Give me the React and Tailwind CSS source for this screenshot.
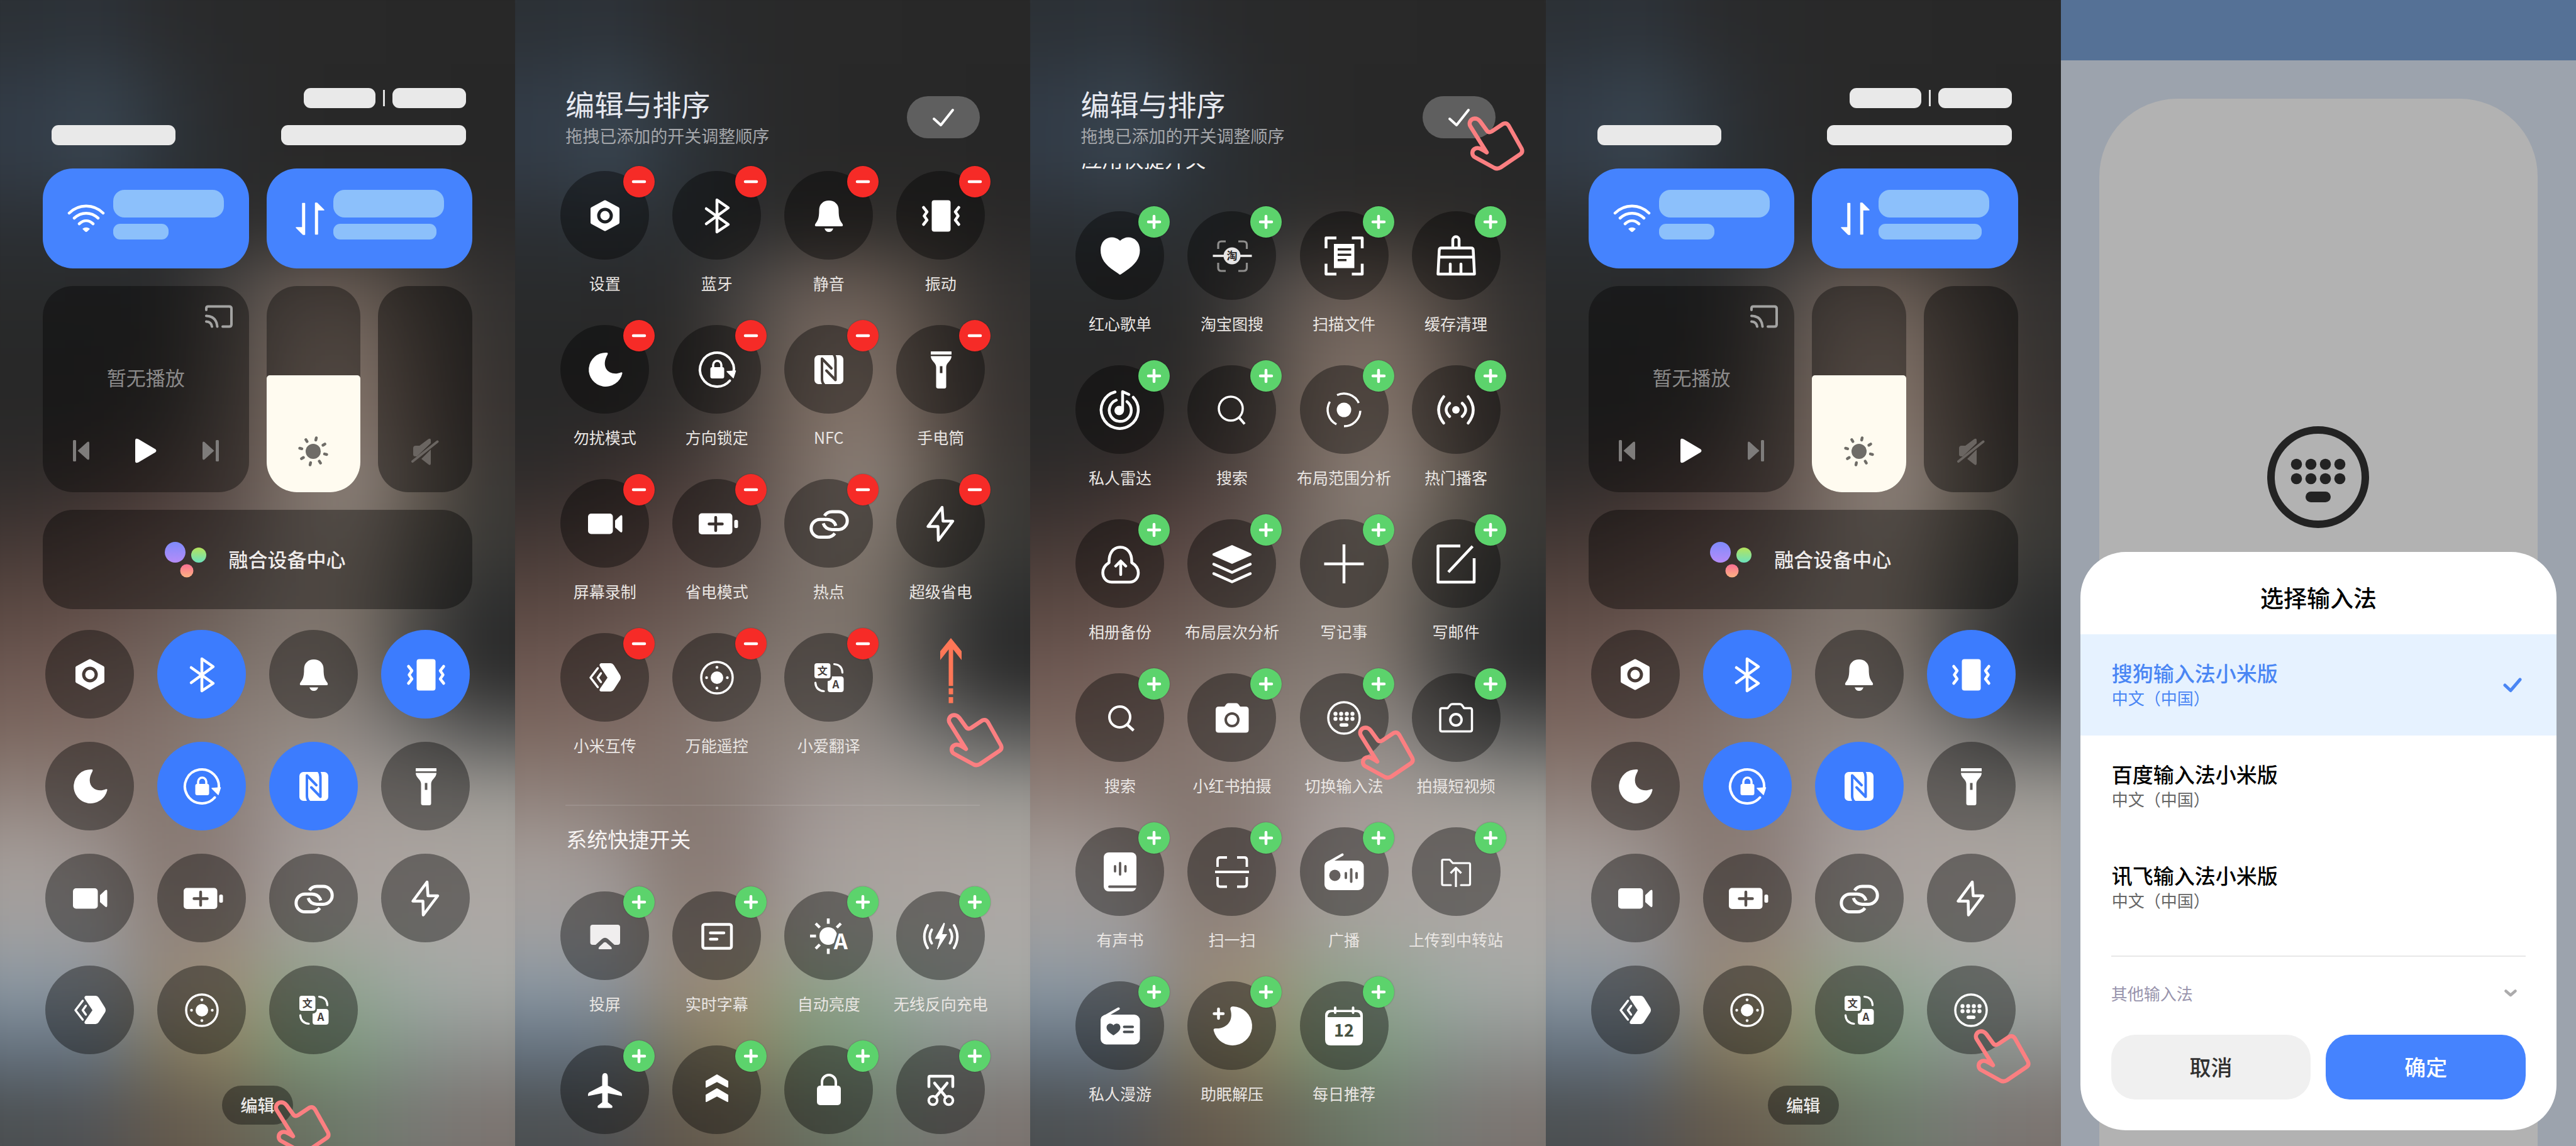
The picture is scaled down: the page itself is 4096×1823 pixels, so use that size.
import React, { useId } from "react";

/* Colour samples of the blurred wallpaper, top to bottom, left to right. */
const WALLPAPER = [
  "2c3136 2d333a 2b2c2e 292a2b 292929 292929 282828 282828",
  "323b46 38444f 2f353b 2a2b2d 292929 282828 282828 272727",
  "333c47 3a4652 2d343b 2a2c2e 292929 282828 282828 272727",
  "2c3035 2d3237 2b2f32 2b2c2d 2f2d2c 302d2b 2e2c2a 2a2929",
  "292b2c 292a2b 2b2b2c 464341 655a54 665a52 4a433e 333130",
  "282828 282828 2c2a29 4a4440 72655d 7b6d64 564c45 353230",
  "282828 2a2828 322f2d 504844 78695f 85766c 5c5049 383331",
  "302c2b 382f2d 453936 5a4d48 7a6d65 8d827b 645a51 3b3835",
  "443835 4e3f3b 5a4844 605450 7b7069 82786f 565049 3a3936",
  "5a4842 604e48 675650 6d615a 7d736c 796f66 4b4946 2d2e2e",
  "6d5852 735f59 75665f 7c7069 857a74 7f766f 484644 292929",
  "7c6860 7e6b64 84736c 8a7e78 91877f 8e8884 73716f 5a5a59",
  "90827c 8a7d77 84766f 8b7f79 9d9390 a39b97 a09b96 9d9a95",
  "a59d99 9c9390 877972 8c7e7a a39b98 a9a19d aaa39f aaa5a0",
  "a2a09f a09d9d 8d8179 94877f a29e98 a8a5a0 aba6a3 ada9a6",
  "8b97a2 8c949c 95897b 9d8f78 8fa088 93a493 9faaa4 a5a8a5",
  "65727f 66737f 7c7560 8b8262 7c9274 7f9880 87928b 8d8f8d",
  "4c5052 525355 62584c 6a6152 686f60 6e7a6b 777773 7b7470",
].map((row) => row.split(" "));

const padRow = (row) => [row[0], ...row, row[row.length - 1]];
const CELLS = [WALLPAPER[0], ...WALLPAPER, WALLPAPER[WALLPAPER.length - 1]].flatMap(padRow);

function Wallpaper() {
  return (
    <div
      aria-hidden="true"
      className="absolute -inset-x-[12.5%] -inset-y-[5.5%] grid grid-cols-10 auto-rows-fr blur-[50px]"
    >
      {CELLS.map((c, i) => (
        <div key={i} style={{ backgroundColor: "#" + c }} />
      ))}
    </div>
  );
}

/* ---------- icon helpers ---------- */

function Cut({ cut, children }) {
  const id = useId();
  return (
    <>
      <mask id={id} maskUnits="userSpaceOnUse" x="0" y="0" width="72" height="72">
        <rect width="72" height="72" fill="#fff" />
        {cut}
      </mask>
      <g mask={`url(#${id})`}>{children}</g>
    </>
  );
}

function Line({ w = 4.5, c = "currentColor", cap = "round", ...rest }) {
  return <path fill="none" stroke={c} strokeWidth={w} strokeLinecap={cap} strokeLinejoin="round" {...rest} />;
}

const ICONS = {
  settings: (
    <>
      <path
        d="M36 14L56.500 25V47L36 58L15.500 47V25ZM36 21a15 15 0 1 0 0 30a15 15 0 1 0 0-30Z"
        fillRule="evenodd"
        stroke="currentColor"
        strokeWidth="5"
        strokeLinejoin="round"
      />
      <circle cx="36" cy="36" r="7.500" />
    </>
  ),
  bluetooth: <Line d="M19 25L54 50L36 62V11L54 23.500L19 49" />,
  bell: (
    <>
      <path d="M36 12C27 12 20.500 18 20.500 27C20.500 41 18 44 14.500 49Q12.500 53 16 53H56Q59.500 53 57.500 49C54 44 51.500 41 51.500 27C51.500 18 45 12 36 12Z" />
      <path d="M29 56.500H43Q41 62 36 62Q31 62 29 56.500Z" />
    </>
  ),
  vibrate: (
    <>
      <rect x="21.500" y="11.500" width="30" height="50" rx="4" />
      <Line d="M8.500 23L14 30L9.500 36.500L14 43L8.500 50M64.500 23L59 30L63.500 36.500L59 43L64.500 50" />
    </>
  ),
  moon: <path d="M38 9A27 27 0 1 0 63.500 42Q64 39.500 61 40.500C46 47 27 35 40 12Q41.500 8.500 38 9Z" />,
  rotationLock: (
    <>
      <Line w={4} d="M62.500 41A27 27 0 1 0 56.500 53.500" />
      <path d="M52 39L65.500 38L62 49Z" stroke="currentColor" strokeWidth="1.500" strokeLinejoin="round" />
      <rect x="25.500" y="32" width="22" height="18" rx="3" />
      <Line w={3.5} d="M30 33V28.500a6.500 6.500 0 0 1 13 0V33" />
    </>
  ),
  nfc: (
    <Cut
      cut={
        <g fill="none" stroke="#000" strokeWidth="4" strokeLinecap="round" strokeLinejoin="round">
          <path d="M28.500 60Q25 57 25 51V18.500L40 34" />
          <path d="M43.500 11.500Q46.500 15 46.500 21V52.500L32 37.500" />
        </g>
      }
    >
      <rect x="13" y="13" width="46" height="46" rx="6.500" />
    </Cut>
  ),
  torch: (
    <>
      <rect x="20" y="7" width="33" height="5" rx="0.500" />
      <path
        fillRule="evenodd"
        d="M20 14.500H53C53 22 44.500 25 44.500 32V63Q44.500 66 41.500 66H32Q28.500 66 28.500 63V32C28.500 25 20 22 20 14.500ZM34.500 30.500V41.500H38.500V30.500Z"
      />
    </>
  ),
  video: (
    <>
      <rect x="9" y="20" width="39.500" height="32.500" rx="5" />
      <path d="M52 31L60 23.500Q63.500 21 63.500 25V47.500Q63.500 51.500 60 49L52 42Z" />
    </>
  ),
  battery: (
    <Cut cut={<path d="M23.500 36.500H44.500M34 26V47" stroke="#000" strokeWidth="4.500" strokeLinecap="round" />}>
      <rect x="7" y="19.500" width="53.500" height="33.500" rx="5" />
      <rect x="63.500" y="30" width="6" height="13" rx="2.500" />
    </Cut>
  ),
  link: (
    <>
      <Line w={5} cap="butt" d="M29 23.500Q33 17 41 17H51A14.200 14.200 0 0 1 51 45.400H41Q30 45 27 35.500" />
      <Line w={5} cap="butt" d="M45.500 51.500Q41 57.600 33 57.600H22A14.200 14.200 0 0 1 22 29.200H33Q44 29.500 47 39.500" />
    </>
  ),
  bolt: <Line d="M38 10L15.500 40.500H31.500L32 62.500L55 32H39.500Z" />,
  miShare: (
    <>
      <path d="M29.500 13H45Q48 13 50 16L60 32Q62 36 60 39.500L50 55Q48 58 45 58H29.500Q26 57 28 53.500L40 36L28 18Q26 14.500 29.500 13Z" />
      <Line w={3.5} d="M24.500 21L13 36L24.500 51M29.500 29L24.500 36L29.500 43" />
    </>
  ),
  remote: (
    <>
      <circle cx="36" cy="36" r="25" fill="none" stroke="currentColor" strokeWidth="3.500" />
      <circle cx="36" cy="36" r="10" />
      {[[36, 19.5], [36, 52.5], [19.5, 36], [52.5, 36]].map(([x, y]) => (
        <circle key={x + "-" + y} cx={x} cy={y} r="2.200" />
      ))}
    </>
  ),
  translate: (
    <>
      <rect x="13" y="13" width="25.500" height="24" rx="4" />
      <path d="M41 34H55Q59.500 34 59.500 38.500V54.500Q59.500 59 55 59H38.500Q34 59 34 54.500V41.500Q41 41 41 34Z" />
      <Line w={3.2} d="M44.500 14.500Q57 15.500 57.500 28M14.500 44Q15.500 56.500 28 57.500" />
      <text x="25.800" y="31" textAnchor="middle" fontSize="16" fontWeight="700" fill="#463f3d">文</text>
      <text x="47" y="53" textAnchor="middle" fontSize="17" fontWeight="700" fill="#463f3d">A</text>
    </>
  ),
  keyboard: (
    <>
      <circle cx="36" cy="36" r="25" fill="none" stroke="currentColor" strokeWidth="3.500" />
      {[22.5, 31.5, 40.5, 49.5].map((x) => (
        <g key={x}>
          <circle cx={x} cy="29.500" r="3.200" />
          <circle cx={x} cy="37.500" r="3.200" />
        </g>
      ))}
      <rect x="29" y="44.500" width="14" height="5.500" rx="2.700" />
    </>
  ),
  cast: (
    <g fill="#f0eeee">
      <path d="M16.500 18H56Q60 18 60 22V46Q60 50 56 50H51L40.500 40.500Q36 37 31.500 40.500L21 50H16.500Q12.500 50 12.500 46V22Q12.500 18 16.500 18Z" />
      <path d="M27 53L34 46.500Q36 45 38 46.500L45.500 53Q48.500 57 45 57H27.500Q24 57 27 53Z" />
    </g>
  ),
  subtitles: (
    <>
      <rect x="13.500" y="17.500" width="45.500" height="38" rx="3" fill="none" stroke="currentColor" strokeWidth="4.500" />
      <Line d="M25.500 31H47M25.500 41H36" />
    </>
  ),
  autoBrightness: (
    <>
      <Cut
        cut={
          <text x="55" y="57" textAnchor="middle" fontSize="34" fontWeight="700" fill="#000" stroke="#000" strokeWidth="6">A</text>
        }
      >
        <circle cx="35" cy="36" r="14" />
      </Cut>
      <Line cap="butt" d="M35 8V16.500M35 56V64.500M6 36H15.500M15 16L21.500 22.500M55 16L48.500 22.500M15 56L21.500 49.500" />
      <text x="55" y="57" textAnchor="middle" fontSize="34" fontWeight="700">A</text>
    </>
  ),
  wirelessCharge: (
    <>
      <path d="M41 15L27 40H35L30.500 57L45.500 33.500H37.500L42 16Z" stroke="currentColor" strokeLinejoin="round" />
      <Line w={4} d="M21.500 26Q15 37 21.500 47.500M50.500 26Q57 37 50.500 47.500M15 19Q4.500 37 15 55M57 19Q67.500 37 57 55" />
    </>
  ),
  airplane: (
    <path d="M36 9C39.500 9 40.500 12 40.500 16V29L61 39.500Q63.500 41 63 45.500L40.500 41V55.500L47.500 61Q48.500 64.500 46 64.500H26Q23.500 64.500 24.500 61L31.500 55.500V41L9 45.500Q8.500 41 11 39.500L31.500 29V16C31.500 12 32.500 9 36 9Z" />
  ),
  chevrons: (
    <g stroke="currentColor" strokeWidth="2" strokeLinejoin="round">
      <path d="M36 12L53 22V31L36 22L19 31V22Z" />
      <path d="M36 34L53 44V54L36 45L19 54V44Z" />
    </g>
  ),
  lock: (
    <>
      <rect x="17" y="29" width="38" height="31" rx="5" />
      <Line w={4} d="M25 31V23a11 11 0 0 1 22 0V31" />
    </>
  ),
  screenshot: (
    <>
      <Line d="M17 30.500V16Q17 14 19 14H53Q55 14 55 16V30.500" />
      <circle cx="23.500" cy="52.500" r="6.800" fill="none" stroke="currentColor" strokeWidth="4" />
      <circle cx="48.500" cy="52.500" r="6.800" fill="none" stroke="currentColor" strokeWidth="4" />
      <Line w={4.5} d="M26 25L44.500 47.500M46 25L27.500 47.500" />
    </>
  ),
  heart: (
    <path d="M36 66Q34 65 27 60C12 50 5 40 5 27C5 13 14 6.500 23 6.500Q30 6.500 36 12Q42 6.500 49 6.500C59 6.500 67.500 14 67.500 27C67.500 40 60 50 45 60Q38 65 36 66Z" />
  ),
  taobao: (
    <>
      <Line w={3.2} cap="butt" c="#8e8d8c" d="M26 13H19Q14 13 14 18V25M46 13H54Q59.500 13 59.500 18V25M26 60H19Q14 60 14 55V47M46 60H54Q59.500 60 59.500 55V47" />
      <path d="M5.500 36H67.500" stroke="#f2f1f0" strokeWidth="3.500" />
      <circle cx="36" cy="36" r="13.500" fill="#e6e5e5" />
      <text x="36" y="42" textAnchor="middle" fontSize="17" fontWeight="700" fill="#2a2827">淘</text>
    </>
  ),
  scanDoc: (
    <>
      <Line cap="butt" d="M24 7.500H7.500V24M48.500 7.500H65V24M24 65H7.500V48.500M48.500 65H65V48.500" />
      <path fillRule="evenodd" d="M20 17H52.500V55.500H20ZM26 24V27.500H47.500V24ZM26 32.500V36H47.500V32.500ZM26 41V44.500H40V41Z" />
    </>
  ),
  broom: (
    <>
      <Line w={4.5} d="M31 22V10.500a5 5 0 0 1 10 0V22" />
      <Line w={4.5} d="M13 23.500H60Q63.500 23.500 63.500 27L65.500 65H7.500L9.500 27Q9.500 23.500 13 23.500ZM9.500 38H63.500M27 49V64M44 49V64" />
    </>
  ),
  radar: (
    <>
      <Line w={4.5} d="M28 7.500A29.500 29.500 0 1 0 57 16M30 20.500A17.500 17.500 0 1 0 47 23" />
      <circle cx="34.500" cy="37" r="7.500" />
      <Line w={4.5} d="M40 37V7L50 11.500" />
    </>
  ),
  searchThin: (
    <>
      <circle cx="34" cy="34" r="19" fill="none" stroke="currentColor" strokeWidth="3.500" />
      <Line w={4} cap="butt" d="M47 48L56 58.500" />
    </>
  ),
  range: (
    <>
      <circle cx="36" cy="36" r="11.500" />
      <Line w={3.5} cap="butt" d="M25 12.500A26 26 0 0 1 59.500 25M62 37.500A26 26 0 0 1 36 62M24 59A26 26 0 0 1 13.500 23" />
    </>
  ),
  podcast: (
    <>
      <circle cx="36" cy="36" r="6" />
      <Line w={4.5} d="M26 25.500Q15 36 26 46.500M46 25.500Q57 36 46 46.500M16.500 15Q0.500 36 16.500 57M55.500 15Q71.500 36 55.500 57" />
    </>
  ),
  cloudUp: (
    <>
      <Line d="M22.500 65C13 65 8.500 57 8.500 50C8.500 43 12 38 18.500 34C18 19 25 9.500 36.500 9.500C48 9.500 55 19 54.500 34C61 38 65 43 65 50C65 58 60 65 51 65Z" />
      <Line d="M37 53V32M29 39.500L37 31.500L45 39.500" />
    </>
  ),
  layers: (
    <>
      <path d="M36 6L66.500 19.500Q68 21 66.500 22.500L36 36L5.500 22.500Q4 21 5.500 19.500Z" />
      <Line d="M7 36.500L36 49.500L65 36.500M7 51.500L36 64.500L65 51.500" />
    </>
  ),
  plus: <path d="M4.500 36H67.500M36 5V67" stroke="currentColor" strokeWidth="4.500" />,
  compose: <Line cap="butt" w={4.5} d="M43 7.500H7.500V65H65V27M24 49L62.500 8" />,
  search: (
    <>
      <circle cx="35.500" cy="34.500" r="16.500" fill="none" stroke="currentColor" strokeWidth="4" />
      <Line cap="butt" w={4.5} d="M46.500 46L57.500 56" />
    </>
  ),
  camera: (
    <>
      <path
        fillRule="evenodd"
        d="M15 18H24L27 14Q28 12.500 30 12.500H43Q45 12.500 46 14L49 18H57.500Q62.500 18 62.500 23V55Q62.500 59.500 57.500 59.500H15Q10 59.500 10 55V23Q10 18 15 18ZM36 27a12 12 0 1 0 0 24a12 12 0 1 0 0-24Z"
      />
      <circle cx="36" cy="39" r="8" />
    </>
  ),
  cameraOutline: (
    <>
      <Line w={3.5} d="M14 20.500H23L27 15.500Q28.500 14 30.500 14H42Q44 14 45.500 15.500L49 20.500H58.500Q61.500 20.500 61.500 23.500V54.500Q61.500 57.500 58.500 57.500H14Q11 57.500 11 54.500V23.500Q11 20.500 14 20.500Z" />
      <circle cx="36" cy="39" r="9" fill="none" stroke="currentColor" strokeWidth="3.800" />
    </>
  ),
  audiobook: (
    <Cut
      cut={
        <path d="M19 59.500H63M28 27V35M36 22V40M44.500 27V35" fill="none" stroke="#000" strokeWidth="3.800" strokeLinecap="round" />
      }
    >
      <rect x="10" y="5" width="52" height="62" rx="8" />
    </Cut>
  ),
  scan: (
    <Line w={3.8} cap="butt" d="M28 13H17Q13 13 13 17V28M44 13H55.500Q59.500 13 59.500 17V28M28 59.500H17Q13 59.500 13 55.500V44M44 59.500H55.500Q59.500 59.500 59.500 55.500V44M9 36H63" />
  ),
  radio: (
    <Cut
      cut={
        <>
          <circle cx="21.500" cy="41.500" r="9" fill="#000" />
          <path d="M39 38V45.500M47.500 32V51.500M56 38V45.500" stroke="#000" strokeWidth="4" strokeLinecap="round" />
        </>
      }
    >
      <rect x="5" y="18" width="62.500" height="47" rx="9" />
      <Line w={4} d="M8 23L33.500 8.500" />
    </Cut>
  ),
  folderUp: (
    <>
      <Line w={3.2} d="M28 57H16Q14 57 14 55V18Q14 16.500 16 16.500H26L31 22H57Q58.500 22 58.500 24V55Q58.500 57 56.500 57H44" />
      <Line w={3.2} cap="butt" d="M36 60V30M27.500 38L36 29.500L44.500 38" />
    </>
  ),
  radioHeart: (
    <Cut
      cut={
        <>
          <path d="M25.500 51C19 47 14.500 43 14.500 38.500C14.500 32 22 30 25.500 35C29 30 36.500 32 36.500 38.500C36.500 43 32 47 25.500 51Z" fill="#000" />
          <path d="M42.500 37.500H56M42.500 45.500H56" stroke="#000" strokeWidth="4" strokeLinecap="round" />
        </>
      }
    >
      <rect x="5" y="18" width="62.500" height="47.500" rx="9" />
      <Line w={4} d="M8 23L33.500 8.500" />
    </Cut>
  ),
  sleep: (
    <>
      <path d="M38 5A31 31 0 1 1 7 44Q5.500 40 10 40C27 41 39 28 33.500 10Q32.500 5 38 5Z" />
      <Line d="M7.500 16.500H22M14.500 9V24" w={4.5} />
    </>
  ),
  calendar: (
    <>
      <path
        fillRule="evenodd"
        d="M15 10.500H57Q66 10.500 66 19.500V58Q66 67 57 67H15Q6 67 6 58V19.500Q6 10.500 15 10.500ZM17 14Q10 14 10 22H62Q62 14 55 14Z"
      />
      <Line w={4} d="M22 7V15M50.500 7V15" />
      <text x="36" y="53" textAnchor="middle" fontSize="27" fontWeight="700" fill="#465242">12</text>
    </>
  ),
};

function Icon({ name }) {
  return (
    <svg viewBox="0 0 72 72" className="size-[72px]" fill="currentColor" aria-hidden="true">
      {ICONS[name]}
    </svg>
  );
}

function Hand({ className }) {
  return (
    <svg viewBox="0 0 91 87" className={"pointer-events-none absolute z-20 h-[87px] w-[91px] " + className} aria-hidden="true">
      <path
        d="M12 3.500C5 4 2 10.500 5 16L31 57.500C22 52 17 48 11.500 52C6.500 55.500 7.500 62.500 12 65L43 82Q48 84.500 53 81.500L84 60.500Q89 57 86.500 51.500L66 15Q62.500 9.500 57 12L39 24Q34 27 31 22.500L20.500 8Q17 3.500 12 3.500Z"
        fill="none"
        stroke="#fb7f81"
        strokeWidth="6.500"
        strokeLinejoin="round"
      />
    </svg>
  );
}

function SwipeUp({ className }) {
  return (
    <svg viewBox="0 0 34 104" className={"pointer-events-none absolute z-20 h-[104px] w-[34px] " + className} aria-hidden="true">
      <path d="M17 0L34 21V35L20.500 18V76H13.500V18L0 35V21ZM13.500 80H20.500V89.500H13.500ZM13.500 94H20.500V103.500H13.500Z" fill="#ff7757" />
    </svg>
  );
}

/* ---------- control centre ---------- */

function Tile({ className = "", children, ...rest }) {
  return (
    <div className={"overflow-hidden rounded-[48px] " + className} {...rest}>
      {children}
    </div>
  );
}

const TOGGLES = [
  ["settings", "设置", false],
  ["bluetooth", "蓝牙", true],
  ["bell", "静音", false],
  ["vibrate", "振动", true],
  ["moon", "勿扰模式", false],
  ["rotationLock", "方向锁定", true],
  ["nfc", "NFC", true],
  ["torch", "手电筒", false],
  ["video", "屏幕录制", false],
  ["battery", "省电模式", false],
  ["link", "热点", false],
  ["bolt", "超级省电", false],
  ["miShare", "小米互传", false],
  ["remote", "万能遥控", false],
  ["translate", "小爱翻译", false],
];

function RoundToggle({ icon, label, on, children }) {
  return (
    <div className="relative">
      <button
        type="button"
        aria-label={label}
        aria-pressed={on}
        className={
          "flex size-[141px] items-center justify-center rounded-full text-white " +
          (on ? "bg-[#3c7cfe]" : "bg-black/38")
        }
      >
        <Icon name={icon} />
      </button>
      {children}
    </div>
  );
}

function ControlCentre({ toggles, handOnEdit, handOnLast }) {
  return (
    <section className="relative overflow-hidden">
      <Wallpaper />
      <div className="relative flex flex-col px-[68px] pt-[140px]">
        <div className="flex items-center justify-end gap-3 pr-[10px]">
          <span className="h-8 w-[114px] rounded-[11px] bg-[#e9e9e9]" />
          <span className="h-[26px] w-[3px] bg-[#e0e0e0]" />
          <span className="h-8 w-[117px] rounded-[11px] bg-[#e9e9e9]" />
        </div>
        <div className="mt-[27px] flex justify-between pr-[10px] pl-[14px]">
          <span className="h-8 w-[197px] rounded-[11px] bg-[#e9e9e9]" />
          <span className="h-8 w-[294px] rounded-[11px] bg-[#e9e9e9]" />
        </div>

        <div className="mt-[37px] grid grid-cols-2 gap-7">
          <button type="button" aria-label="WLAN" className="flex h-[159px] items-center gap-[13px] rounded-[48px] bg-[#4583fe] pl-[39px] text-white">
            <svg viewBox="0 0 60 46" className="h-[46px] w-[60px]" aria-hidden="true">
              <Line w={4.5} d="M3 14C18 -1 42 -1 57 14M11 22C22 11.500 38 11.500 49 22M19 31C26 24.500 34 24.500 41 31" />
              <path d="M24 39Q30 34.500 36 39L32 43Q30 45 28 43Z" fill="currentColor" />
            </svg>
            <span className="mt-[34px] flex flex-col gap-[10px] self-start">
              <span className="h-[44px] w-[176px] rounded-[18px] bg-[#8cc0fb]" />
              <span className="h-[25px] w-[88px] rounded-[11px] bg-[#8cc0fb]" />
            </span>
          </button>
          <button type="button" aria-label="移动数据" className="flex h-[159px] items-center gap-[14px] rounded-[48px] bg-[#4583fe] pl-[46px] text-white">
            <svg viewBox="0 0 46 52" className="h-[52px] w-[46px]" fill="currentColor" aria-hidden="true">
              <g stroke="currentColor" strokeWidth="1.500" strokeLinejoin="round">
                <path d="M11 1.500H14.500V51H12L1 40H11Z" />
                <path d="M31.500 50.500V1H34L45 12H35V50.500Z" />
              </g>
            </svg>
            <span className="mt-[34px] flex flex-col gap-[10px] self-start">
              <span className="h-[44px] w-[176px] rounded-[18px] bg-[#8cc0fb]" />
              <span className="h-[25px] w-[164px] rounded-[11px] bg-[#8cc0fb]" />
            </span>
          </button>
        </div>

        <div className="mt-7 grid grid-cols-2 gap-7">
          <Tile className="flex h-[328px] flex-col bg-black/36">
            <button type="button" aria-label="投屏播放" className="mt-[30px] mr-[26px] self-end text-[#a3a3a2]">
              <svg viewBox="0 0 44 37" className="block h-[37px] w-[44px]" aria-hidden="true">
                <Line w={4} d="M2 8V5.500Q2 2.500 5 2.500H38.500Q42 2.500 42 6V31Q42 34.500 38.500 34.500H28M2 17.500Q18 18 19.500 34.500M2 26.500Q10 27 11 34.500" />
              </svg>
            </button>
            <p className="mt-[58px] text-center text-[31px] leading-10 text-[#8b8a8a]">暂无播放</p>
            <div className="mt-[77px] flex h-10 items-center justify-between px-12">
              <button type="button" aria-label="上一首" className="text-[#7e7c7b]">
                <svg viewBox="0 0 26 34" className="block h-[34px] w-[26px]" fill="currentColor" aria-hidden="true">
                  <rect width="5" height="34" rx="1.500" />
                  <path d="M7.500 17L23 3Q26 1.500 26 5V29Q26 32.500 23 31Z" />
                </svg>
              </button>
              <button type="button" aria-label="播放" className="text-white">
                <svg viewBox="0 0 34 40" className="block h-10 w-[34px]" fill="currentColor" aria-hidden="true">
                  <path d="M0 4Q0 -1 5 1.500L32 17.500Q35 20 32 22.500L5 38.500Q0 41 0 36Z" />
                </svg>
              </button>
              <button type="button" aria-label="下一首" className="text-[#7e7c7b]">
                <svg viewBox="0 0 26 34" className="block h-[34px] w-[26px]" fill="currentColor" aria-hidden="true">
                  <rect x="21" width="5" height="34" rx="1.500" />
                  <path d="M18.500 17L3 3Q0 1.500 0 5V29Q0 32.500 3 31Z" />
                </svg>
              </button>
            </div>
          </Tile>
          <div className="grid grid-cols-2 gap-7">
            <Tile className="flex h-[328px] flex-col justify-end bg-black/36" aria-label="亮度">
              <div className="flex h-[186px] items-end justify-center rounded-t-[5px] bg-[#fffbf0] pb-10">
                <svg viewBox="0 0 50 50" className="size-[50px] text-[#6f6c67]" aria-hidden="true">
                  <circle cx="25" cy="25" r="12" fill="currentColor" />
                  <g transform="rotate(13 25 25)">
                    <Line
                      w={4.5}
                      d="M25 3V6.500M25 43.500V47M3 25H6.500M43.500 25H47M9.500 9.500L12 12M38 38L40.500 40.500M9.500 40.500L12 38M38 12L40.500 9.500"
                    />
                  </g>
                </svg>
              </div>
            </Tile>
            <Tile className="flex h-[328px] items-end justify-center bg-black/40 pb-[42px]" aria-label="音量">
              <svg viewBox="0 0 44 44" className="size-11 text-[#6a6561]" fill="currentColor" aria-hidden="true">
                <path d="M3 16Q3 12 7 12H13L27 1.500Q31 -0.500 31 3V8L9 29H6Q3 29 3 26Z" />
                <path d="M31 18V40Q31 44 27.500 42L16 33Z" />
                <Line w={4} d="M2 37L41.500 5.500" />
              </svg>
            </Tile>
          </div>
        </div>

        <button type="button" className="mt-7 flex h-[158px] items-center justify-center gap-9 rounded-[48px] bg-black/38 pr-2">
          <svg viewBox="0 0 66 57" className="h-[57px] w-[66px]" aria-hidden="true">
            <defs>
              <linearGradient id="blobA" x2="0" y2="1"><stop stopColor="#7f8bfb" /><stop offset="1" stopColor="#b58cf8" /></linearGradient>
              <linearGradient id="blobB" x2="0" y2="1"><stop stopColor="#b5e35c" /><stop offset="1" stopColor="#6ce2bd" /></linearGradient>
              <linearGradient id="blobC" x2="0" y2="1"><stop stopColor="#fb6f93" /><stop offset="1" stopColor="#fcb382" /></linearGradient>
            </defs>
            <circle cx="16.500" cy="16.500" r="16.500" fill="url(#blobA)" />
            <circle cx="54" cy="21" r="12" fill="url(#blobB)" />
            <circle cx="35" cy="46" r="10.500" fill="url(#blobC)" />
          </svg>
          <span className="pb-[2px] text-[31px] leading-10 font-medium text-[#efeceb]">融合设备中心</span>
        </button>

        <div className="mt-[33px] grid grid-cols-4 justify-items-center gap-[37px] px-1">
          {toggles.map(([icon, label, on], i) => (
            <RoundToggle key={icon} icon={icon} label={label} on={on}>
              {handOnLast && i === toggles.length - 1 && <Hand className="top-[101px] left-[74px]" />}
            </RoundToggle>
          ))}
        </div>

        <div className="relative mt-[50px] self-center">
          <button type="button" className="flex h-[62px] w-[113px] items-center justify-center rounded-full bg-black/38 text-[27px] font-medium text-[#eceae8]">
            编辑
          </button>
          {handOnEdit && <Hand className="top-[23px] left-[82px]" />}
        </div>
      </div>
    </section>
  );
}

/* ---------- edit pages ---------- */

function Badge({ kind, label }) {
  const add = kind === "add";
  return (
    <button
      type="button"
      aria-label={(add ? "添加" : "移除") + label}
      className={
        "absolute -top-2 left-[100px] flex size-[50px] items-center justify-center rounded-full text-white shadow-[0_0_2px_rgba(0,0,0,0.35)] " +
        (add ? "bg-[#5cd36c]" : "bg-[#f62b27]")
      }
    >
      <svg viewBox="0 0 24 24" className="size-6" aria-hidden="true">
        <Line w={4.5} d={add ? "M3 12H21M12 3V21" : "M3 12H21"} />
      </svg>
    </button>
  );
}

function EditCell({ icon, label, kind, children }) {
  return (
    <div className="flex w-[141px] flex-col items-center">
      <div className="relative flex size-[141px] items-center justify-center rounded-full bg-black/38 text-white">
        <Icon name={icon} />
        <Badge kind={kind} label={label} />
        {children}
      </div>
      <span className="mt-[21px] text-[25px] leading-8 whitespace-nowrap text-[#eae6e3]">{label}</span>
    </div>
  );
}

function EditGrid({ className, children }) {
  return <div className={"grid grid-cols-4 justify-items-center gap-x-[37px] gap-y-[51px] px-[72px] " + className}>{children}</div>;
}

function EditPage({ hand, children }) {
  return (
    <section className="relative overflow-hidden">
      <Wallpaper />
      <div className="relative flex h-full flex-col">
        <header className="flex justify-between px-20 pt-[140px] pb-[26px]">
          <div>
            <h1 className="text-[46px] leading-[48px] text-[#e6e8ef]">编辑与排序</h1>
            <p className="mt-[10px] text-[27px] leading-9 text-[#a4a6aa]">拖拽已添加的开关调整顺序</p>
          </div>
          <div className="relative mt-[13px] self-start">
            <button type="button" aria-label="完成" className="flex h-[67px] w-[116px] items-center justify-center rounded-full bg-[#5f5f5f] text-white">
              <svg viewBox="0 0 36 32" className="h-8 w-9" aria-hidden="true">
                <Line w={4} d="M3 18L14 28L33 4" />
              </svg>
            </button>
            {hand && <Hand className="top-[32px] left-[71px]" />}
          </div>
        </header>
        <div className="min-h-0 flex-1 overflow-hidden">{children}</div>
      </div>
    </section>
  );
}

const SYSTEM = [
  ["cast", "投屏"],
  ["subtitles", "实时字幕"],
  ["autoBrightness", "自动亮度"],
  ["wirelessCharge", "无线反向充电"],
];
const SYSTEM_TAIL = [
  ["airplane", "飞行模式"],
  ["chevrons", "性能模式"],
  ["lock", "锁屏"],
  ["screenshot", "截屏"],
];
const APPS = [
  ["heart", "红心歌单"],
  ["taobao", "淘宝图搜"],
  ["scanDoc", "扫描文件"],
  ["broom", "缓存清理"],
  ["radar", "私人雷达"],
  ["searchThin", "搜索"],
  ["range", "布局范围分析"],
  ["podcast", "热门播客"],
  ["cloudUp", "相册备份"],
  ["layers", "布局层次分析"],
  ["plus", "写记事"],
  ["compose", "写邮件"],
  ["search", "搜索"],
  ["camera", "小红书拍摄"],
  ["keyboard", "切换输入法"],
  ["cameraOutline", "拍摄短视频"],
  ["audiobook", "有声书"],
  ["scan", "扫一扫"],
  ["radio", "广播"],
  ["folderUp", "上传到中转站"],
  ["radioHeart", "私人漫游"],
  ["sleep", "助眠解压"],
  ["calendar", "每日推荐"],
];

function SortPage() {
  return (
    <EditPage>
      <EditGrid className="pt-3">
        {TOGGLES.map(([icon, label]) => (
          <EditCell key={icon} icon={icon} label={label} kind="remove" />
        ))}
        <div className="relative w-[141px]">
          <SwipeUp className="top-2 left-[70px]" />
          <Hand className="top-[127px] left-20" />
        </div>
      </EditGrid>
      <hr className="mx-20 mt-[79px] border-t-2 border-white/10" />
      <h2 className="mt-8 px-[81px] text-[33px] leading-10 text-[#f7f4f3]">系统快捷开关</h2>
      <EditGrid className="mt-16">
        {SYSTEM.map(([icon, label]) => (
          <EditCell key={icon} icon={icon} label={label} kind="add" />
        ))}
        {SYSTEM_TAIL.map(([icon, label]) => (
          <div key={icon} className="relative flex size-[141px] items-center justify-center rounded-full bg-black/38 text-white">
            <Icon name={icon} />
            <Badge kind="add" label={label} />
          </div>
        ))}
      </EditGrid>
    </EditPage>
  );
}

function AppsPage() {
  return (
    <EditPage hand>
      <h2 className="-mt-7 px-[81px] text-[33px] leading-10 text-[#f7f4f3]">应用快捷开关</h2>
      <EditGrid className="mt-16">
        {APPS.map(([icon, label]) => (
          <EditCell key={icon} icon={icon} label={label} kind="add">
            {icon === "keyboard" && <Hand className="top-[83px] left-[92px]" />}
          </EditCell>
        ))}
      </EditGrid>
    </EditPage>
  );
}

/* ---------- input method picker ---------- */

const METHODS = ["搜狗输入法小米版", "百度输入法小米版", "讯飞输入法小米版"];

function PickerPage() {
  return (
    <section className="relative flex flex-col overflow-hidden bg-[#9ca3ad]">
      <div className="h-24 bg-[#557196]" />
      <div className="mx-[61px] mt-[61px] flex flex-1 justify-center rounded-t-[124px] bg-[#b2b2b2] pt-[521px]">
        <svg viewBox="0 0 162 162" className="size-[162px]" fill="#232323" aria-hidden="true">
          <circle cx="81" cy="81" r="75" fill="none" stroke="#232323" strokeWidth="12" />
          {[46.5, 69.5, 92.5, 115.5].map((x) => (
            <g key={x}>
              <circle cx={x} cy="60.500" r="8.800" />
              <circle cx={x} cy="83.500" r="8.800" />
            </g>
          ))}
          <rect x="61" y="104" width="40" height="17" rx="8.500" />
        </svg>
      </div>
      <form
        role="dialog"
        aria-labelledby="picker-title"
        onSubmit={(e) => e.preventDefault()}
        className="absolute inset-x-[31px] bottom-[25px] overflow-hidden rounded-[72px] bg-white pb-[49px]"
      >
        <h2 id="picker-title" className="pt-12 pb-[35px] text-center text-[37px] leading-[48px] font-medium text-black">
          选择输入法
        </h2>
        {METHODS.map((name, i) => (
          <label
            key={name}
            className="flex h-[161px] items-center justify-between pr-[55px] pl-[50px] has-checked:bg-[#e6f2ff] has-checked:text-[#4a86f4]"
          >
            <input type="radio" name="ime" defaultChecked={i === 0} className="peer sr-only" />
            <span className="pb-1">
              <span className="block text-[33px] leading-[44px] font-medium">{name}</span>
              <span className={"block text-[26px] leading-9 " + (i === 0 ? "" : "text-[#666]")}>中文（中国）</span>
            </span>
            {i === 0 && (
              <svg viewBox="0 0 30 26" className="h-[26px] w-[30px]" aria-hidden="true">
                <Line w={5} d="M3 13L12 21.500L27 4" />
              </svg>
            )}
          </label>
        ))}
        <div className="mt-7 px-[49px]">
          <hr className="border-t-2 border-[#e8e8e8]" />
          <button type="button" className="mt-10 flex w-full items-center justify-between pr-[14px] text-[26px] leading-9 text-[#9894ad]">
            其他输入法
            <svg viewBox="0 0 20 12" className="h-3 w-5 text-[#acabac]" aria-hidden="true">
              <Line w={4.5} d="M2.500 2.500L10 9L17.500 2.500" />
            </svg>
          </button>
          <div className="mt-12 grid grid-cols-2 gap-6 text-[34px] font-medium">
            <button type="button" className="h-[103px] rounded-[38px] bg-[#f0f0f0] pb-[2px] text-[#303030]">取消</button>
            <button type="submit" className="h-[103px] rounded-[38px] bg-[#4583fe] pb-[2px] text-white">确定</button>
          </div>
        </div>
      </form>
    </section>
  );
}

export default function App() {
  return (
    <main className="grid h-screen grid-cols-5 grid-rows-1 overflow-hidden bg-[#282828] font-['Noto_Sans_CJK_SC','Noto_Sans',sans-serif]">
      <ControlCentre toggles={TOGGLES} handOnEdit />
      <SortPage />
      <AppsPage />
      <ControlCentre toggles={[...TOGGLES, ["keyboard", "切换输入法", false]]} handOnLast />
      <PickerPage />
    </main>
  );
}
